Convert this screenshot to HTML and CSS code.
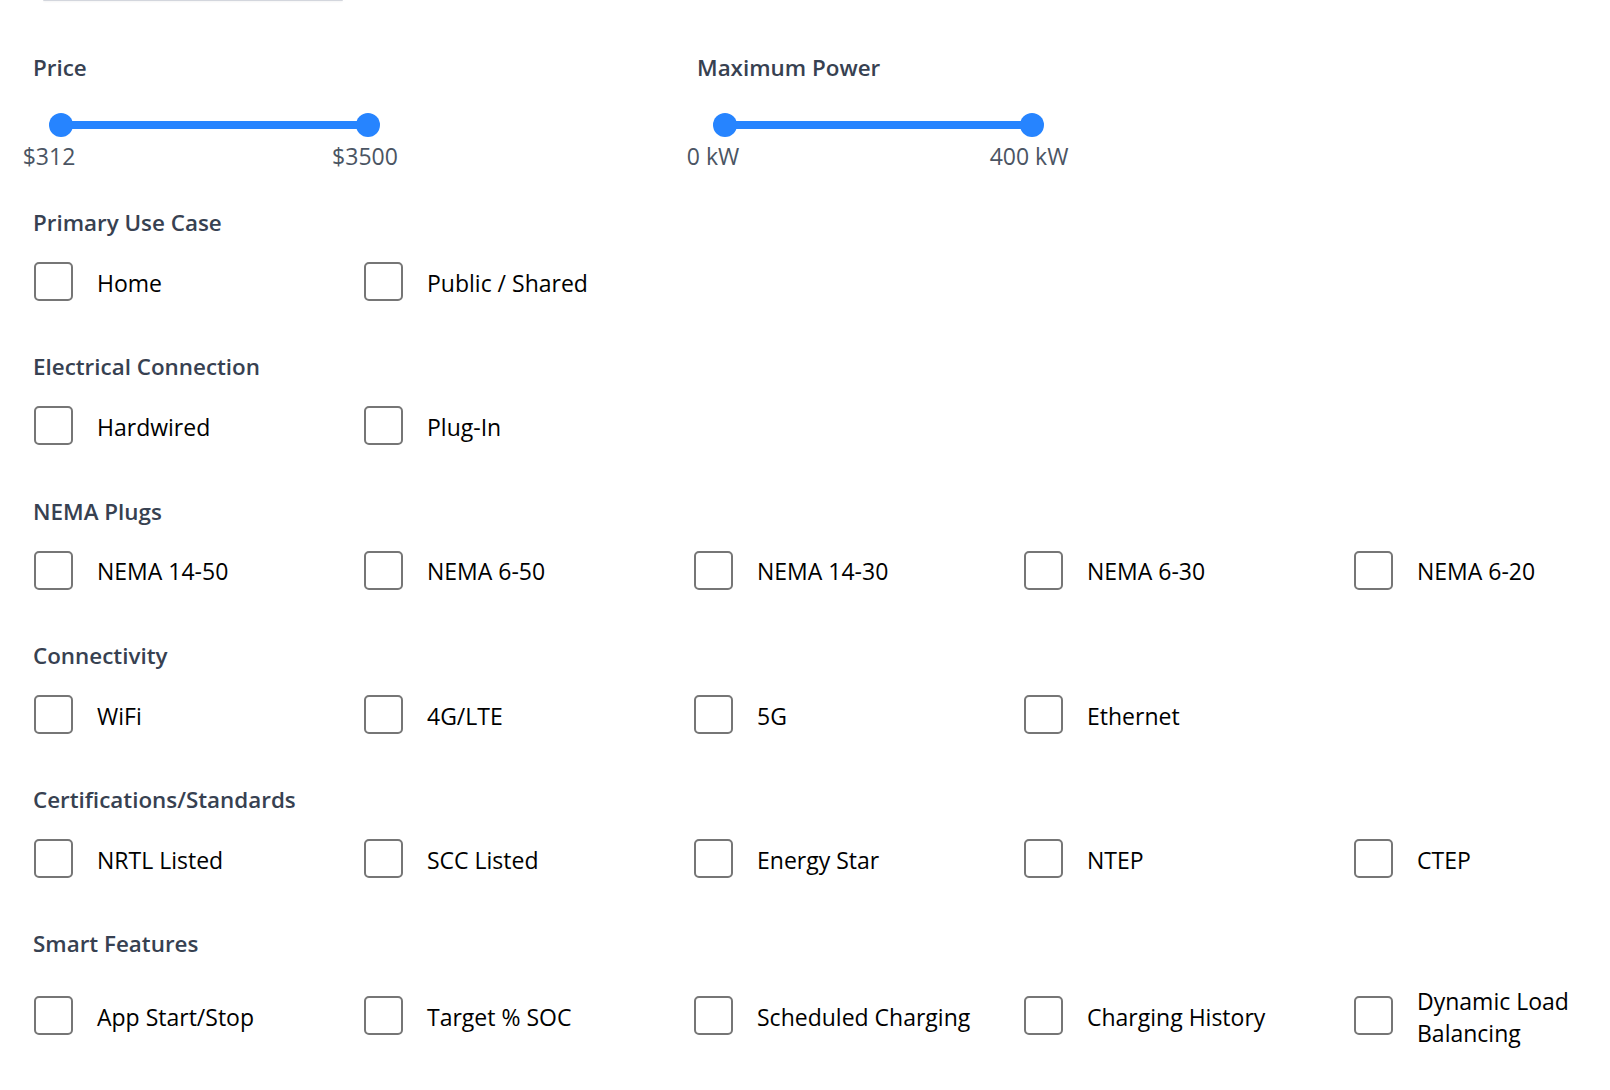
FILE: index.html
```html
<!DOCTYPE html>
<html lang="en">
<head>
<meta charset="utf-8">
<title>Charger Filters</title>
<link rel="stylesheet" href="styles.css">
</head>
<body>
<div class="top-strip"></div>
<main class="filters">
  <div class="range-row">
    <section class="range">
      <h3 class="group-title">Price</h3>
      <div class="range-track">
        <span class="thumb" style="left:0%"></span>
        <span class="thumb" style="left:100%"></span>
      </div>
      <div class="range-values">
        <span class="value value-min">$312</span>
        <span class="value value-max">$3500</span>
      </div>
    </section>
    <section class="range">
      <h3 class="group-title">Maximum Power</h3>
      <div class="range-track">
        <span class="thumb" style="left:0%"></span>
        <span class="thumb" style="left:100%"></span>
      </div>
      <div class="range-values">
        <span class="value value-min">0 kW</span>
        <span class="value value-max">400 kW</span>
      </div>
    </section>
  </div>

  <section class="group">
    <h3 class="group-title">Primary Use Case</h3>
    <div class="options">
      <label class="option"><input type="checkbox"><span>Home</span></label>
      <label class="option"><input type="checkbox"><span>Public / Shared</span></label>
    </div>
  </section>

  <section class="group">
    <h3 class="group-title">Electrical Connection</h3>
    <div class="options">
      <label class="option"><input type="checkbox"><span>Hardwired</span></label>
      <label class="option"><input type="checkbox"><span>Plug-In</span></label>
    </div>
  </section>

  <section class="group">
    <h3 class="group-title">NEMA Plugs</h3>
    <div class="options">
      <label class="option"><input type="checkbox"><span>NEMA 14-50</span></label>
      <label class="option"><input type="checkbox"><span>NEMA 6-50</span></label>
      <label class="option"><input type="checkbox"><span>NEMA 14-30</span></label>
      <label class="option"><input type="checkbox"><span>NEMA 6-30</span></label>
      <label class="option"><input type="checkbox"><span>NEMA 6-20</span></label>
    </div>
  </section>

  <section class="group">
    <h3 class="group-title">Connectivity</h3>
    <div class="options">
      <label class="option"><input type="checkbox"><span>WiFi</span></label>
      <label class="option"><input type="checkbox"><span>4G/LTE</span></label>
      <label class="option"><input type="checkbox"><span>5G</span></label>
      <label class="option"><input type="checkbox"><span>Ethernet</span></label>
    </div>
  </section>

  <section class="group">
    <h3 class="group-title">Certifications/Standards</h3>
    <div class="options">
      <label class="option"><input type="checkbox"><span>NRTL Listed</span></label>
      <label class="option"><input type="checkbox"><span>SCC Listed</span></label>
      <label class="option"><input type="checkbox"><span>Energy Star</span></label>
      <label class="option"><input type="checkbox"><span>NTEP</span></label>
      <label class="option"><input type="checkbox"><span>CTEP</span></label>
    </div>
  </section>

  <section class="group">
    <h3 class="group-title">Smart Features</h3>
    <div class="options">
      <label class="option"><input type="checkbox"><span>App Start/Stop</span></label>
      <label class="option"><input type="checkbox"><span>Target % SOC</span></label>
      <label class="option"><input type="checkbox"><span>Scheduled Charging</span></label>
      <label class="option"><input type="checkbox"><span>Charging History</span></label>
      <label class="option"><input type="checkbox"><span>Dynamic Load Balancing</span></label>
    </div>
  </section>
</main>
</body>
</html>
```

FILE: styles.css
```css
html, body {
  margin: 0;
  padding: 0;
  background: #ffffff;
}

body {
  font-family: "Open Sans", "Noto Sans", sans-serif;
  color: #000000;
}

.top-strip {
  width: 300px;
  height: 1px;
  margin-left: 43px;
  background: #d3d6dd;
  border-radius: 0 0 3px 3px;
  box-shadow: 0 1px 2px rgba(0, 0, 0, 0.06);
}

.filters {
  padding: 51px 16px 0 34px;
  display: flex;
  flex-direction: column;
}

.group-title {
  margin: 0 0 0 -1px;
  font-size: 22.4px;
  line-height: 32px;
  font-weight: 600;
  color: #374151;
}

.range-row {
  display: grid;
  grid-template-columns: 664px 1fr;
  margin-bottom: 35px;
}

.range-track {
  position: relative;
  width: 307px;
  height: 24px;
  margin: 29px 0 0 27px;
}

.range-track::before {
  content: "";
  position: absolute;
  left: 0;
  right: 0;
  top: 8px;
  height: 8px;
  border-radius: 4px;
  background: #2684ff;
}

.thumb {
  position: absolute;
  top: 0;
  width: 24px;
  height: 24px;
  border-radius: 50%;
  background: #2684ff;
  transform: translateX(-50%);
}

.range-values {
  position: relative;
  width: 307px;
  height: 32px;
  margin: 3px 0 0 27px;
  font-size: 23px;
  line-height: 32px;
  color: #4b5563;
}

.value {
  position: absolute;
  top: 0;
  white-space: nowrap;
}

.value-min {
  left: 0;
  transform: translateX(calc(-50% - 12px));
}

.value-max {
  left: 100%;
  transform: translateX(calc(-50% - 3px));
}

.group + .group {
  margin-top: 50.1px;
}

.options {
  display: grid;
  grid-template-columns: repeat(4, 330px) 1fr;
  align-items: center;
  margin-top: 23.2px;
}

.option {
  display: flex;
  align-items: center;
  gap: 24px;
}

.option input {
  -webkit-appearance: none;
  appearance: none;
  flex: none;
  margin: 0;
  width: 39px;
  height: 39px;
  border: 2px solid #767676;
  border-radius: 5px;
  background: #ffffff;
}

.option span {
  font-size: 23px;
  line-height: 32px;
  color: #000000;
  margin-top: 1px;
  margin-bottom: -1px;
}
```
